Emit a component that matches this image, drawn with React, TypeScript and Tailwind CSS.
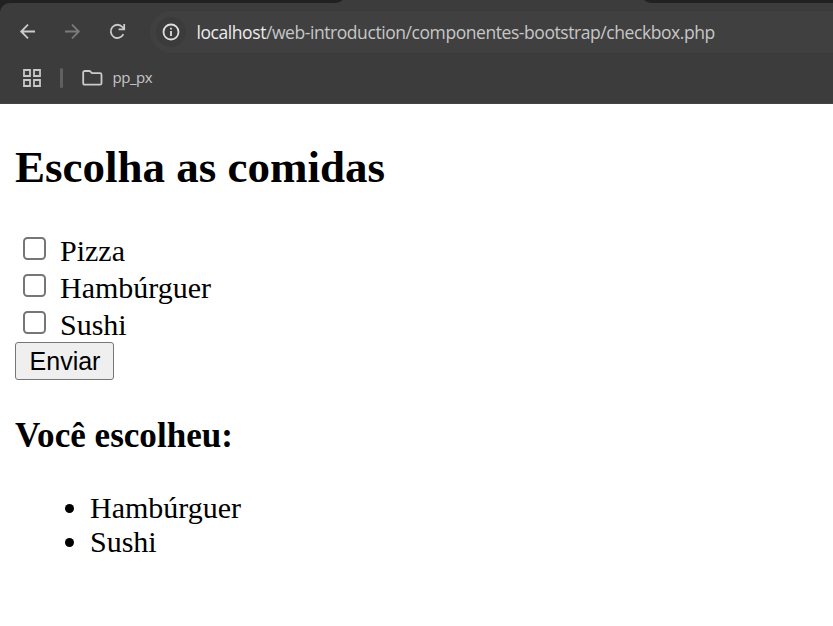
import React from "react";

const foods = ["Pizza", "Hambúrguer", "Sushi"];
const chosen = ["Hambúrguer", "Sushi"];

function TabStrip() {
  return (
    <svg className="block h-[11px] w-full shrink-0" width="833" height="11" viewBox="0 0 833 11">
      <path d="M0 0H342.5Q340 3 334 3H10Q2 3 0 12Z" fill="#202222" />
      <path d="M644 0Q647 3 653 3H833V0Z" fill="#202222" />
    </svg>
  );
}

function Toolbar() {
  return (
    <div className="flex h-[42px] items-center">
      <svg className="block shrink-0" width="150" height="42" viewBox="0 11 150 42" fill="none" strokeWidth="1.8">
        <path d="M35 31.5H21.5M28 24.7L21.2 31.5L28 38.3" stroke="#cbcbcb" />
        <path d="M65 31.5H78.5M72 24.7L78.8 31.5L72 38.3" stroke="#7b7b7b" />
        <path d="M123.4 34.2A6.6 6.6 0 1 1 122.4 27L124 28.8M124.2 24V29.4H118.6" stroke="#cbcbcb" />
      </svg>
      <div className="flex h-full flex-1 items-center rounded-l-full bg-[#404040] pl-1.5">
        <div className="flex size-[30px] items-center justify-center rounded-full bg-[#3b3b3b]">
          <svg width="18" height="18" viewBox="0 0 18 18" fill="none" stroke="#dedede">
            <circle cx="9" cy="9" r="7.5" strokeWidth="1.8" />
            <path d="M9 8V13M9 4.8V6.6" strokeWidth="1.8" />
          </svg>
        </div>
        <span className="ml-[10.5px] whitespace-nowrap font-['Open_Sans',sans-serif] text-[17.5px] leading-6 tracking-[-0.43px] text-[#c7c7c7]">
          <span className="text-[#ececec]">localhost</span>/web-introduction/componentes-bootstrap/checkbox.php
        </span>
      </div>
    </div>
  );
}

function Bookmarks() {
  return (
    <div className="flex h-[50px] items-center">
      <svg className="ml-[22px] block" width="20" height="20" viewBox="0 0 20 20" fill="none" stroke="#c7c7c7" strokeWidth="1.8">
        <path d="M2 2H8V8H2ZM12 2H18V8H12ZM2 12H8V18H2ZM12 12H18V18H12Z" />
      </svg>
      <span className="ml-[18px] h-5 w-[3px] rounded-full bg-[#606060]" />
      <svg className="ml-[19px] block" width="21" height="16" viewBox="0 0 21 16" fill="none" stroke="#cbcbcb" strokeWidth="1.8">
        <path d="M3 1H7.2Q8 1 8.5 1.6L10 3.2H18Q19.5 3.2 19.5 4.7V13.2Q19.5 14.7 18 14.7H3Q1.2 14.7 1.2 13.2V2.5Q1.2 1 3 1Z" />
      </svg>
      <span className="mb-0.5 ml-[9.5px] font-['Open_Sans',sans-serif] text-[15px] leading-5 tracking-[-0.45px] text-[#c7c7c7]">pp_px</span>
    </div>
  );
}

export default function App() {
  return (
    <div className="h-[626px] w-[833px] overflow-hidden bg-white text-black">
      <header className="h-[104px] border-b border-[#484244] bg-[#3c3c3c]">
        <TabStrip />
        <Toolbar />
        <Bookmarks />
      </header>
      <main className="pl-[15px] pt-[37px] font-['Liberation_Serif',serif] text-[30px] leading-[34px]">
        <h2 className="h-[52px] text-[45px] font-bold leading-[52px]">Escolha as comidas</h2>
        <form className="pt-[39px]" onSubmit={(e) => e.preventDefault()}>
          {foods.map((food) => (
            <label key={food} className="flex h-[37px] items-start pl-2 leading-[37px]">
              <input
                type="checkbox"
                className="mt-[5px] size-[22.5px] shrink-0 appearance-none rounded-[4.5px] border-2 border-[#767676] bg-white"
              />
              <span className="ml-[14.5px]">{food}</span>
            </label>
          ))}
          <button className="-mt-px block h-[38px] w-[99px] rounded-[3px] border border-[#767676] bg-[#efefef] pl-px font-['Liberation_Sans',sans-serif] text-[25px] leading-9">
            Enviar
          </button>
        </form>
        <h3 className="mt-9 text-[35.1px] font-bold leading-10">Você escolheu:</h3>
        <ul className="mt-[35px]">
          {chosen.map((food) => (
            <li key={food} className="flex h-[34px] items-center pl-[50px]">
              <span className="size-[9px] rounded-full bg-black" />
              <span className="ml-4">{food}</span>
            </li>
          ))}
        </ul>
      </main>
    </div>
  );
}
